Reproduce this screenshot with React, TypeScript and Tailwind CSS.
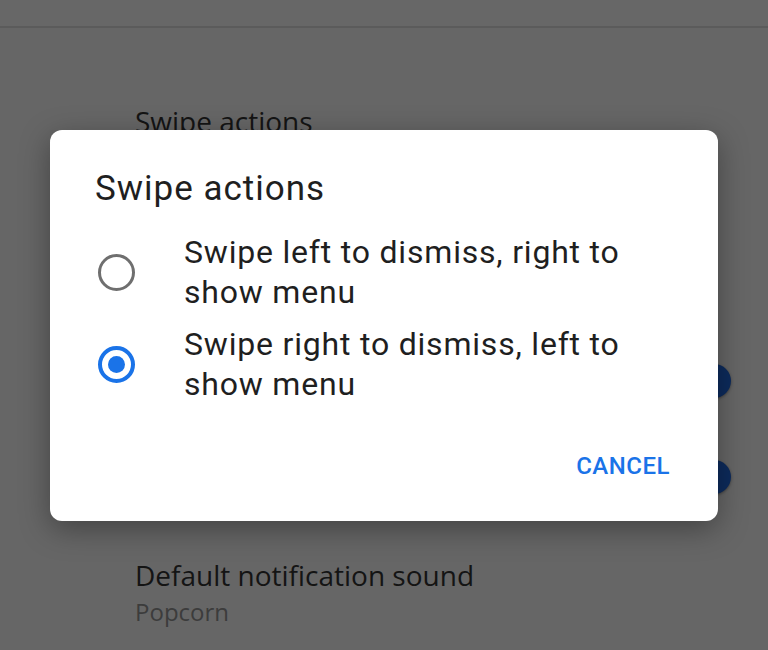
import React from 'react';

const options = [
  { label: 'Swipe left to dismiss, right to show menu', checked: false },
  { label: 'Swipe right to dismiss, left to show menu', checked: true },
];

const Radio = ({ checked }: { checked: boolean }) => (
  <div
    className={`flex h-[37px] w-[37px] shrink-0 items-center justify-center rounded-full ${
      checked ? 'border-[4px] border-[#1a73e8]' : 'border-[3px] border-[#6f6f6f]'
    }`}
  >
    {checked && <div className="h-[17px] w-[17px] rounded-full bg-[#1a73e8]" />}
  </div>
);

const Toggle = () => (
  <div className="flex h-[96px] items-center justify-end">
    <div className="h-[34px] w-[34px] rounded-full bg-[#0d2b5c] shadow-[0_1px_3px_rgba(0,0,0,0.4)]" />
  </div>
);

const App = () => {
  return (
    <div className="relative h-[650px] w-[768px] overflow-hidden bg-[#666666] font-['Roboto',sans-serif]">
      {/* page behind the scrim */}
      <div className="h-[28px] border-b-2 border-[#5b5b5b] bg-[#676767]" />
      <div className="flex flex-col pl-[135px] pr-[37px]">
        <div className="mt-[77px] text-[28px] leading-[32px] text-[#141414] font-['Open_Sans',sans-serif]">
          Swipe actions
        </div>
        <div className="mt-[196px]">
          <Toggle />
          <Toggle />
        </div>
        <div className="mt-[33px] text-[28px] leading-[34px] text-[#141414] font-['Open_Sans',sans-serif]">
          Default notification sound
        </div>
        <div className="mt-[4px] text-[24px] leading-[32px] text-[#3c3c3c] font-['Open_Sans',sans-serif]">Popcorn</div>
      </div>

      {/* dialog */}
      <div className="absolute left-[50px] top-[130px] flex h-[391px] w-[668px] flex-col rounded-[12px] bg-white shadow-[0_8px_30px_rgba(0,0,0,0.35)]">
        <h2 className="pl-[45px] pt-[39px] text-[35px] leading-[40px] tracking-[1px] text-[#1f1f1f]">Swipe actions</h2>
        <div className="mt-[23px] flex flex-col gap-[12px]">
          {options.map((o, i) => (
            <div key={i} className="flex items-center pl-[48px]">
              <Radio checked={o.checked} />
              <p className="w-[500px] pl-[49px] text-[32px] leading-[40px] tracking-[0.8px] text-[#1f1f1f]">{o.label}</p>
            </div>
          ))}
        </div>
        <div className="mt-auto flex justify-end pb-[41px] pr-[48px]">
          <button className="text-[24px] font-medium leading-[28px] tracking-[0.5px] text-[#1a73e8]">CANCEL</button>
        </div>
      </div>
    </div>
  );
};

export default App;
